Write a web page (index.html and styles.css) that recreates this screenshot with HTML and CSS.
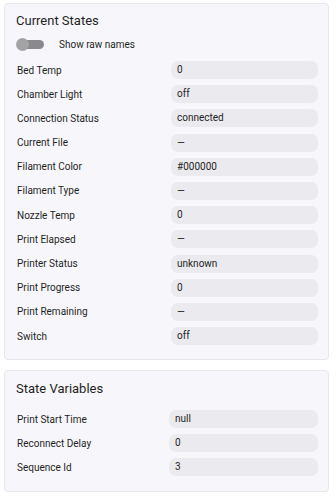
FILE: index.html
```html
<!DOCTYPE html>
<html lang="en">
<head>
    <meta charset="UTF-8">
    <meta name="viewport" content="width=device-width, initial-scale=1.0">
    <title>States</title>
    <link rel="stylesheet" href="styles.css">
</head>
<body>

<div class="card">
    <h2 class="card-title">Current States</h2>
    <div class="toggle-row">
        <span class="toggle"><span class="knob"></span></span>
        <span class="toggle-label">Show raw names</span>
    </div>
    <div class="rows">
        <div class="row"><span class="name">Bed Temp</span><span class="value">0</span></div>
        <div class="row"><span class="name">Chamber Light</span><span class="value">off</span></div>
        <div class="row"><span class="name">Connection Status</span><span class="value">connected</span></div>
        <div class="row"><span class="name">Current File</span><span class="value">—</span></div>
        <div class="row"><span class="name">Filament Color</span><span class="value">#000000</span></div>
        <div class="row"><span class="name">Filament Type</span><span class="value">—</span></div>
        <div class="row"><span class="name">Nozzle Temp</span><span class="value">0</span></div>
        <div class="row"><span class="name">Print Elapsed</span><span class="value">—</span></div>
        <div class="row"><span class="name">Printer Status</span><span class="value">unknown</span></div>
        <div class="row"><span class="name">Print Progress</span><span class="value">0</span></div>
        <div class="row"><span class="name">Print Remaining</span><span class="value">—</span></div>
        <div class="row"><span class="name">Switch</span><span class="value">off</span></div>
    </div>
</div>

<div class="card card-vars">
    <h2 class="card-title">State Variables</h2>
    <div class="rows">
        <div class="row"><span class="name">Print Start Time</span><span class="value">null</span></div>
        <div class="row"><span class="name">Reconnect Delay</span><span class="value">0</span></div>
        <div class="row"><span class="name">Sequence Id</span><span class="value">3</span></div>
    </div>
</div>

</body>
</html>
```

FILE: styles.css
```css
body {
    font-family: Roboto, 'Liberation Sans', sans-serif;
    background-color: #ffffff;
    color: #1f1f24;
    margin: 0;
    padding: 3px 7px 0 4px;
}
.card {
    background-color: #f7f7fb;
    border: 1px solid #e6e6ec;
    border-radius: 4px;
    padding: 8px 10px 14px 11px;
    margin-bottom: 10px;
}
.card-title {
    font-size: 13px;
    font-weight: 400;
    line-height: 18px;
    margin: 0;
}
.toggle-row {
    display: flex;
    align-items: center;
    height: 16px;
    margin: 6px 0 9px 0;
}
.toggle {
    position: relative;
    width: 27px;
    height: 9px;
    margin-left: 1px;
    border-radius: 5px;
    background-color: #8a8a8e;
}
.knob {
    position: absolute;
    left: -1px;
    top: -2px;
    width: 13px;
    height: 13px;
    border-radius: 50%;
    background-color: #a3a3a6;
}
.toggle-label {
    font-size: 10px;
    margin-left: 15px;
}
.rows {
    display: flex;
    flex-direction: column;
    gap: 6.2px;
}
.card-vars {
    padding-top: 9px;
    padding-bottom: 15px;
}
.card-vars .card-title {
    margin-bottom: 12px;
}
.card-vars .rows {
    gap: 6px;
}
.row {
    display: grid;
    grid-template-columns: 1fr 147px;
    gap: 10px;
    align-items: center;
    font-size: 10px;
}
.card-vars .row {
    grid-template-columns: 1fr 149px;
}
.name {
    padding-left: 1px;
}
.value {
    background-color: #ebebef;
    border-radius: 7px;
    height: 18px;
    line-height: 18px;
    padding-left: 6px;
}
```
